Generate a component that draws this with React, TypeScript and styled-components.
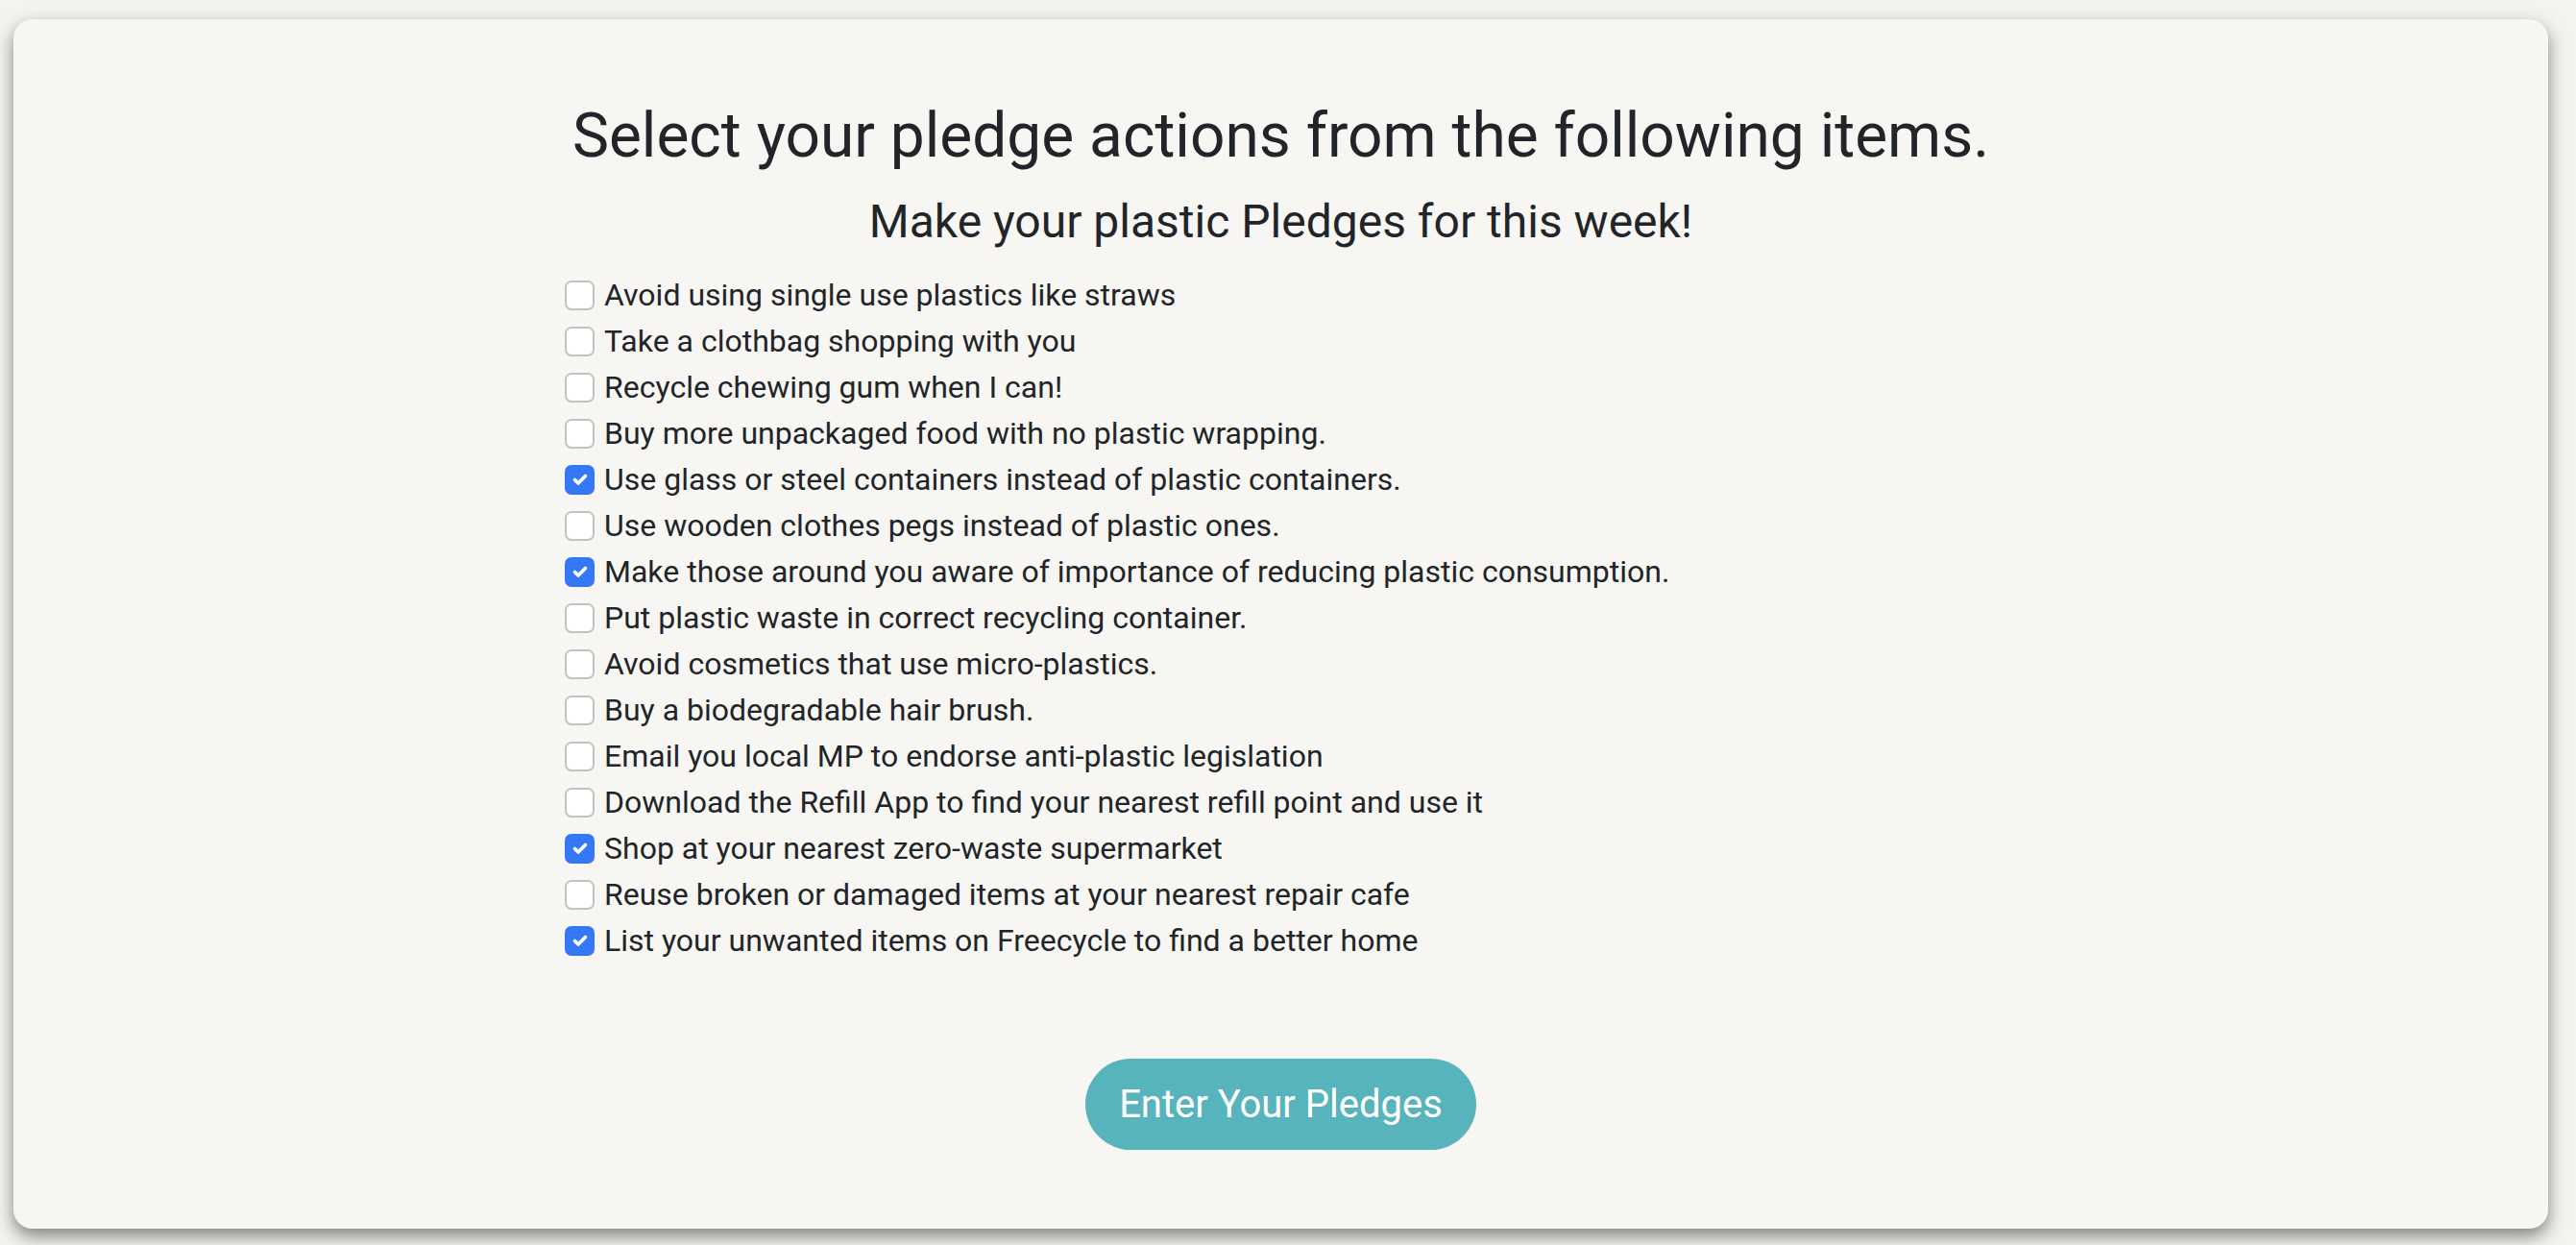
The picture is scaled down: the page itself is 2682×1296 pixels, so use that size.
import React from "react";
import styled, { createGlobalStyle } from "styled-components";

const GlobalStyle = createGlobalStyle`
  html, body { margin: 0; padding: 0; }
  body {
    background: #f4f3ef;
    font-family: Roboto, "Liberation Sans", Arial, sans-serif;
    color: #212529;
  }
`;

const Page = styled.div`
  padding: 20px 29px 17px 14px;
  box-sizing: border-box;
  width: 2682px;
  height: 1296px;
`;

const Card = styled.main`
  background: #f7f6f2;
  border-radius: 20px;
  box-shadow: 0 8px 18px rgba(40, 38, 32, 0.55);
  height: 100%;
  box-sizing: border-box;
  padding: 84px 0 81px;
  display: flex;
  flex-direction: column;
  align-items: center;
`;

const Title = styled.h1`
  margin: 0;
  font-size: 64px;
  font-weight: 400;
  line-height: 1.2;
  text-align: center;
`;

const Subtitle = styled.h2`
  margin: 21px 0 0;
  font-size: 48px;
  font-weight: 400;
  line-height: 1.2;
  text-align: center;
`;

const List = styled.ul`
  list-style: none;
  margin: 24px 0 0;
  padding: 0;
  width: 1491px;
  box-sizing: border-box;
`;

const Row = styled.li`
  display: flex;
  align-items: center;
  gap: 10px;
  height: 48px;
  font-size: 32px;
  line-height: 48px;
  cursor: pointer;
`;

const Box = styled.span<{ $checked: boolean }>`
  width: 31px;
  height: 31px;
  box-sizing: border-box;
  border-radius: 7px;
  flex: none;
  display: flex;
  align-items: center;
  justify-content: center;
  background: ${(p) => (p.$checked ? "#3478f6" : "#ffffff")};
  border: ${(p) => (p.$checked ? "none" : "2px solid #c2c2c0")};
`;

const Button = styled.button`
  margin-top: 99px;
  background: #58b4bc;
  color: #ffffff;
  border: none;
  border-radius: 48px;
  font-family: Roboto, "Liberation Sans", Arial, sans-serif;
  font-size: 40px;
  line-height: 60px;
  padding: 17.5px 35px;
  cursor: pointer;
`;

const items: { text: string; checked: boolean }[] = [
  { text: "Avoid using single use plastics like straws", checked: false },
  { text: "Take a clothbag shopping with you", checked: false },
  { text: "Recycle chewing gum when I can!", checked: false },
  { text: "Buy more unpackaged food with no plastic wrapping.", checked: false },
  { text: "Use glass or steel containers instead of plastic containers.", checked: true },
  { text: "Use wooden clothes pegs instead of plastic ones.", checked: false },
  { text: "Make those around you aware of importance of reducing plastic consumption.", checked: true },
  { text: "Put plastic waste in correct recycling container.", checked: false },
  { text: "Avoid cosmetics that use micro-plastics.", checked: false },
  { text: "Buy a biodegradable hair brush.", checked: false },
  { text: "Email you local MP to endorse anti-plastic legislation", checked: false },
  { text: "Download the Refill App to find your nearest refill point and use it", checked: false },
  { text: "Shop at your nearest zero-waste supermarket", checked: true },
  { text: "Reuse broken or damaged items at your nearest repair cafe", checked: false },
  { text: "List your unwanted items on Freecycle to find a better home", checked: true },
];

const Check = () => (
  <svg width="22" height="22" viewBox="0 0 22 22" fill="none">
    <path d="M5.5 11.5l3.6 3.6L16.5 7.5" stroke="#fff" strokeWidth="3.6" strokeLinecap="round" strokeLinejoin="round" />
  </svg>
);

export default function App() {
  const [state, setState] = React.useState(items.map((i) => i.checked));
  return (
    <>
      <GlobalStyle />
      <Page>
        <Card>
          <Title>Select your pledge actions from the following items.</Title>
          <Subtitle>Make your plastic Pledges for this week!</Subtitle>
          <List>
            {items.map((it, i) => (
              <Row
                key={it.text}
                onClick={() => setState((s) => s.map((v, j) => (j === i ? !v : v)))}
              >
                <Box $checked={state[i]}>{state[i] && <Check />}</Box>
                {it.text}
              </Row>
            ))}
          </List>
          <Button>Enter Your Pledges</Button>
        </Card>
      </Page>
    </>
  );
}
